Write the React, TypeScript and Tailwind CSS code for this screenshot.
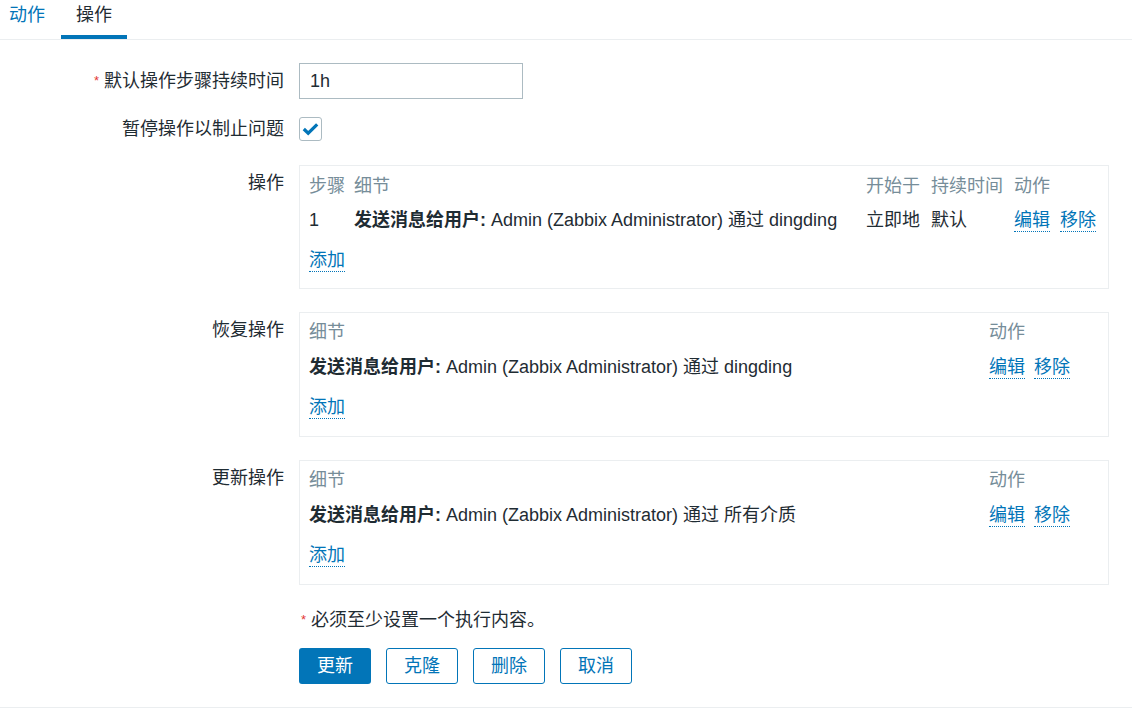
import React from "react";

const FONT = "font-['Liberation_Sans','Noto_Sans_CJK_SC',sans-serif]";

const Link = ({ children }: { children: React.ReactNode }) => (
  <a className="text-[#0275b8] border-b border-dotted border-[#0275b8] leading-[22px] cursor-pointer">
    {children}
  </a>
);

const Row = ({
  label,
  required,
  className = "",
  labelClass = "",
  children,
}: {
  label: string;
  required?: boolean;
  className?: string;
  labelClass?: string;
  children: React.ReactNode;
}) => (
  <div className={`flex ${className}`}>
    <div className={`w-[284px] shrink-0 text-right leading-[22px] ${labelClass}`}>
      {required && <span className="text-[#e33734] text-[13px] align-top mr-[5px]">*</span>}
      {label}
    </div>
    <div className="pl-[15px] flex-1 pr-[23px]">{children}</div>
  </div>
);

const Message = ({ via }: { via: string }) => (
  <>
    <b className="font-bold">发送消息给用户:</b> Admin (Zabbix Administrator) 通过 {via}
  </>
);

// recovery / update operation block
const SimpleOps = ({ via }: { via: string }) => (
  <div className="border border-[#ebeef0] pt-[3px] pb-[17px] px-[9px]">
    <div className="flex h-[32px] items-center text-[#768d99]">
      <div className="flex-1">细节</div>
      <div className="w-[110px]">动作</div>
    </div>
    <div className="flex h-[38px] items-center">
      <div className="flex-1">
        <Message via={via} />
      </div>
      <div className="w-[110px] flex gap-[9px]">
        <Link>编辑</Link>
        <Link>移除</Link>
      </div>
    </div>
    <div className="mt-[10px] flex">
      <Link>添加</Link>
    </div>
  </div>
);

export default function App() {
  return (
    <div className={`w-[1132px] h-[708px] bg-white text-[18px] text-[#1f2c33] flex flex-col ${FONT}`}>
      {/* Tabs */}
      <div className="h-[40px] border-b border-[#ebeef0] flex items-stretch">
        <div className="pl-[9px] pr-[16px] pt-[4px] leading-[22px] text-[#0275b8]">动作</div>
        <div className="px-[15px] pt-[4px] leading-[22px] h-[39px] border-b-[4px] border-[#0275b8] text-[#1f2c33]">
          操作
        </div>
      </div>

      {/* Form */}
      <Row label="默认操作步骤持续时间" required className="mt-[23px] h-[36px] items-center">
        <input
          defaultValue="1h"
          className="w-[224px] h-[36px] border border-[#acbbc2] px-[10px] outline-none text-[#1f2c33]"
        />
      </Row>

      <Row label="暂停操作以制止问题" className="mt-[18px] h-[24px] items-center">
        <div className="w-[23px] h-[24px] border border-[#acbbc2] rounded-[3px] flex items-center justify-center">
          <svg width="17" height="14" viewBox="0 0 17 14">
            <path d="M1.8 7 L6.2 11.2 L15.2 2.4" fill="none" stroke="#0275b8" strokeWidth="3.2" />
          </svg>
        </div>
      </Row>

      <Row label="操作" className="mt-[24px]" labelClass="pt-[7px]">
        <div className="border border-[#ebeef0] pt-[4px] pb-[16px] px-[9px]">
          <div className="flex h-[32px] items-center text-[#768d99]">
            <div className="w-[45px]">步骤</div>
            <div className="flex-1">细节</div>
            <div className="w-[65px]">开始于</div>
            <div className="w-[83px]">持续时间</div>
            <div className="w-[85px]">动作</div>
          </div>
          <div className="flex h-[36px] items-center">
            <div className="w-[45px]">1</div>
            <div className="flex-1">
              <Message via="dingding" />
            </div>
            <div className="w-[65px]">立即地</div>
            <div className="w-[83px]">默认</div>
            <div className="w-[85px] flex gap-[10px]">
              <Link>编辑</Link>
              <Link>移除</Link>
            </div>
          </div>
          <div className="mt-[11px] flex">
            <Link>添加</Link>
          </div>
        </div>
      </Row>

      <Row label="恢复操作" className="mt-[23px]" labelClass="pt-[7px]">
        <SimpleOps via="dingding" />
      </Row>

      <Row label="更新操作" className="mt-[23px]" labelClass="pt-[7px]">
        <SimpleOps via="所有介质" />
      </Row>

      <Row label="" className="mt-[24px]">
        <div className="leading-[22px]">
          <span className="text-[#e33734] text-[13px] align-top mr-[5px] ml-[2px]">*</span>
          必须至少设置一个执行内容。
        </div>
      </Row>

      <Row label="" className="mt-[17px]">
        <div className="flex gap-[15px]">
          <button className="w-[72px] h-[36px] rounded-[3px] bg-[#0275b8] text-white">更新</button>
          <button className="w-[72px] h-[36px] rounded-[3px] border border-[#0275b8] text-[#0275b8] bg-white">克隆</button>
          <button className="w-[72px] h-[36px] rounded-[3px] border border-[#0275b8] text-[#0275b8] bg-white">删除</button>
          <button className="w-[72px] h-[36px] rounded-[3px] border border-[#0275b8] text-[#0275b8] bg-white">取消</button>
        </div>
      </Row>

      <div className="mt-[23px] border-t border-[#ebeef0]" />
    </div>
  );
}
